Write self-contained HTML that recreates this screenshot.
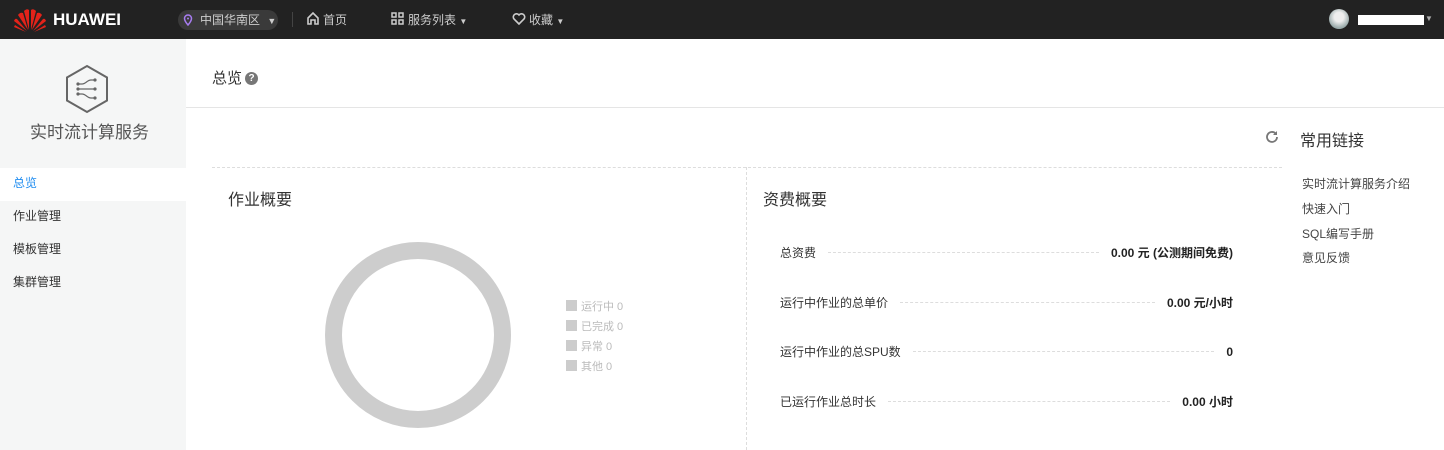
<!DOCTYPE html>
<html><head><meta charset="utf-8"><style>
*{margin:0;padding:0;box-sizing:border-box}
body{width:1444px;height:450px;overflow:hidden;background:#fff;font-family:"Liberation Sans","Noto Sans CJK SC",sans-serif;color:#333;position:relative}
.a{position:absolute;white-space:nowrap}
.top{position:absolute;left:0;top:0;width:1444px;height:39px;background:#222}
.side{position:absolute;left:0;top:39px;width:186px;height:411px;background:#f5f6f6}
.nav{color:#ccc;font-size:12px}
.item{position:absolute;left:0;width:186px;height:33px;line-height:31px;padding-left:13px;font-size:12px;color:#333}
.leg{font-size:11px;color:#bbb}
.leg i{display:inline-block;width:11px;height:11px;background:#ccc;vertical-align:-1px;margin-right:4px}
.row{position:absolute;left:780px;width:453px;font-size:12px;display:flex;align-items:center}
.row .d{flex:1;border-top:1px dashed #ddd;margin:0 12px}
.row b{font-weight:bold;color:#222}
.lk{position:absolute;left:1302px;font-size:12px;color:#444}
</style></head><body>
<div class="top"></div>
<svg class="a" style="left:12px;top:5px" width="36" height="28" viewBox="0 0 36 26">
<g fill="#e3231a"><path d="M17 24 L12 5 Q15 2 17 4Z"/><path d="M19 24 L24 5 Q21 2 19 4Z"/><path d="M16 24 L6 9 Q8 6 11 7Z"/><path d="M20 24 L30 9 Q28 6 25 7Z"/><path d="M15 25 L2 15 Q3 12 5 13Z"/><path d="M21 25 L34 15 Q33 12 31 13Z"/><path d="M14 26 L2 21 L3 19Z"/><path d="M22 26 L34 21 L33 19Z"/></g></svg>
<div class="a" style="left:53px;top:10px;color:#fff;font-weight:bold;font-size:17px">HUAWEI</div>
<div class="a" style="left:178px;top:10px;width:100px;height:20px;border-radius:10px;background:#3a3a3a"></div>
<svg class="a" style="left:183px;top:14px" width="10" height="12"><path d="M5 1a3.5 3.5 0 0 1 3.5 3.5C8.5 7 5 11 5 11S1.5 7 1.5 4.5A3.5 3.5 0 0 1 5 1z" fill="none" stroke="#a77cf0" stroke-width="1.5"/><circle cx="5" cy="4.5" r="1" fill="#a77cf0"/></svg>
<div class="a nav" style="left:200px;top:11px">中国华南区 <span style="font-size:9px;margin-left:4px">▼</span></div>
<div class="a" style="left:292px;top:12px;width:1px;height:15px;background:#444"></div>
<svg class="a" style="left:306px;top:11px" width="14" height="14"><path d="M2 7L7 2l5 5v6H9V9H5v4H2z" fill="none" stroke="#ccc" stroke-width="1.6"/></svg>
<div class="a nav" style="left:323px;top:11px">首页</div>
<svg class="a" style="left:391px;top:12px" width="13" height="13" fill="none" stroke="#ccc" stroke-width="1.5"><rect x="1" y="1" width="4" height="4"/><rect x="8" y="1" width="4" height="4"/><rect x="1" y="8" width="4" height="4"/><rect x="8" y="8" width="4" height="4"/></svg>
<div class="a nav" style="left:408px;top:11px">服务列表 <span style="font-size:8px">▼</span></div>
<svg class="a" style="left:512px;top:12px" width="14" height="13"><path d="M7 12L2 7a3 3 0 0 1 5-4 3 3 0 0 1 5 4z" fill="none" stroke="#ccc" stroke-width="1.6"/></svg>
<div class="a nav" style="left:529px;top:11px">收藏 <span style="font-size:8px">▼</span></div>
<div class="a" style="left:1329px;top:9px;width:20px;height:20px;border-radius:50%;background:radial-gradient(circle at 50% 40%,#eee 30%,#9aa 70%)"></div>
<div class="a" style="left:1358px;top:15px;width:66px;height:10px;background:#fff"></div>
<div class="a" style="left:1425px;top:14px;color:#aaa;font-size:8px">▼</div>

<div class="side"></div>
<svg class="a" style="left:64px;top:64px" width="46" height="50" viewBox="0 0 46 50"><path d="M23 2L43 13.5v23L23 48 3 36.5v-23z" fill="none" stroke="#666" stroke-width="2"/><g stroke="#666" stroke-width="1.2" fill="#666"><path d="M14 20h4c4 0 5-4 9-4h4M14 25h17M14 30h4c4 0 5 4 9 4h4" fill="none"/><circle cx="14" cy="20" r="1"/><circle cx="14" cy="25" r="1"/><circle cx="14" cy="30" r="1"/><circle cx="31" cy="16" r="1"/><circle cx="31" cy="25" r="1"/><circle cx="31" cy="34" r="1"/></g></svg>
<div class="a" style="left:30px;top:118px;font-size:17px;color:#555">实时流计算服务</div>
<div class="item" style="top:168px;background:#fff;color:#1e8cf0">总览</div>
<div class="item" style="top:201px">作业管理</div>
<div class="item" style="top:234px">模板管理</div>
<div class="item" style="top:267px">集群管理</div>

<div class="a" style="left:212px;top:67px;font-size:15px;color:#333">总览</div>
<div class="a" style="left:245px;top:72px;width:13px;height:13px;border-radius:50%;background:#777;color:#fff;font-size:10px;font-weight:bold;text-align:center;line-height:13px">?</div>
<div class="a" style="left:186px;top:107px;width:1258px;height:1px;background:#e5e5e5"></div>
<svg class="a" style="left:1264px;top:129px" width="16" height="16"><path d="M13 8a5 5 0 1 1-1.5-3.6" fill="none" stroke="#777" stroke-width="1.8"/><path d="M13 2v4h-4z" fill="#777"/></svg>
<div class="a" style="left:1300px;top:127px;font-size:16px;color:#333">常用链接</div>
<div class="a" style="left:212px;top:167px;width:1070px;border-top:1px dashed #ddd"></div>
<div class="a" style="left:746px;top:167px;height:283px;border-left:1px dashed #ddd"></div>
<div class="a" style="left:228px;top:186px;font-size:16px">作业概要</div>
<div class="a" style="left:763px;top:186px;font-size:16px">资费概要</div>
<div class="a" style="left:325px;top:242px;width:186px;height:186px;border-radius:50%;border:17px solid #cdcdcd"></div>
<div class="a leg" style="left:566px;top:298px"><i></i>运行中 0</div>
<div class="a leg" style="left:566px;top:318px"><i></i>已完成 0</div>
<div class="a leg" style="left:566px;top:338px"><i></i>异常 0</div>
<div class="a leg" style="left:566px;top:358px"><i></i>其他 0</div>
<div class="row" style="top:244px"><span>总资费</span><span class="d"></span><b>0.00 元 (公测期间免费)</b></div>
<div class="row" style="top:294px"><span>运行中作业的总单价</span><span class="d"></span><b>0.00 元/小时</b></div>
<div class="row" style="top:343px"><span>运行中作业的总SPU数</span><span class="d"></span><b>0</b></div>
<div class="row" style="top:393px"><span>已运行作业总时长</span><span class="d"></span><b>0.00 小时</b></div>
<div class="lk" style="top:175px">实时流计算服务介绍</div>
<div class="lk" style="top:200px">快速入门</div>
<div class="lk" style="top:225px">SQL编写手册</div>
<div class="lk" style="top:249px">意见反馈</div>
</body></html>
